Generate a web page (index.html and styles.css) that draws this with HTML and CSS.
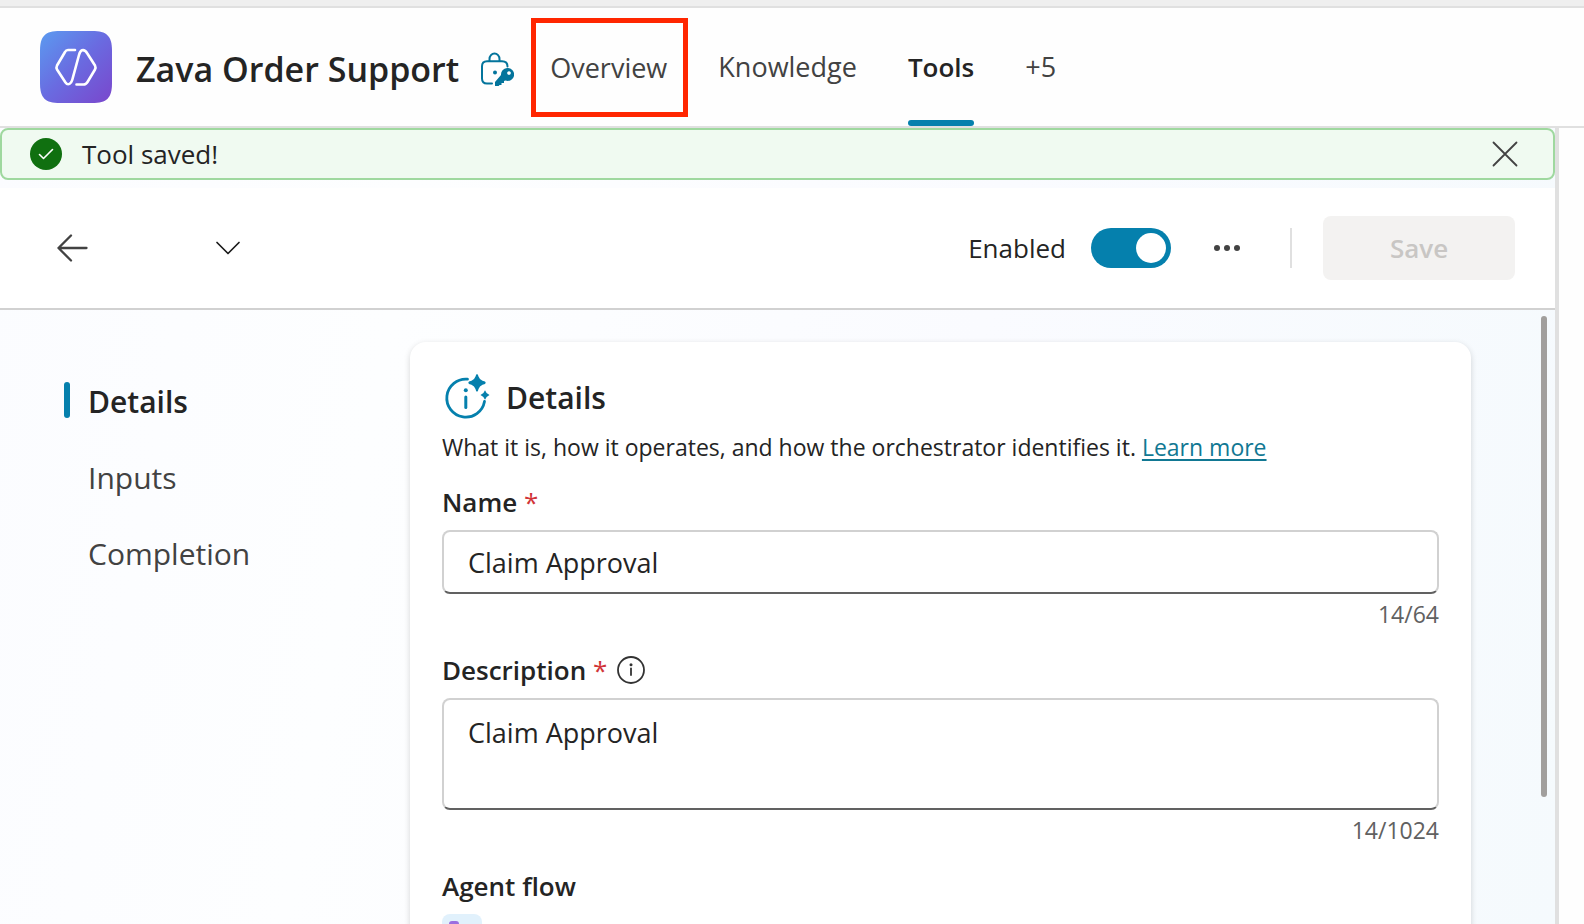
FILE: index.html
```html
<!DOCTYPE html>
<html lang="en">
<head>
<meta charset="utf-8">
<title>Zava Order Support</title>
<link rel="stylesheet" href="styles.css">
</head>
<body>
<header class="header">
  <svg class="logo" viewBox="0 0 72 72" aria-hidden="true">
    <defs>
      <linearGradient id="logo-fill" x1="0" y1="0" x2="1" y2="1">
        <stop offset="0" stop-color="#5b9bf0"/>
        <stop offset=".5" stop-color="#6a6ae0"/>
        <stop offset="1" stop-color="#7a46cc"/>
      </linearGradient>
    </defs>
    <path fill="url(#logo-fill)" d="M0 20C0 5 5 0 20 0H52C67 0 72 5 72 20V52C72 67 67 72 52 72H20C5 72 0 67 0 52Z"/>
    <path fill="none" stroke="#fff" stroke-width="2.600" stroke-linecap="round" stroke-linejoin="round" d="M35 19H28Q26 19 25 21L17 34.500Q16 36.500 17 38.500L25.500 51.500Q28 55 31 51.500Q32 50 32.500 48L39 24Q40 20 42 19.200Q45 18.500 47 22L55 34.500Q56 36.500 55 38.500L47.500 51Q46 53.500 43.500 53.500H36.500"/>
  </svg>
  <h1 class="title">Zava Order Support</h1>
  <svg class="lock" viewBox="0 0 34 36" aria-hidden="true">
    <g fill="none" stroke="#03749c" stroke-width="2" stroke-linecap="round">
      <path d="M9.500 9V7A5 5.500 0 0 1 19.500 7V9"/>
      <path d="M27.500 14.500C27.500 11 25.500 9.200 22 9.200H7Q2 9.200 2 14.200V26.500Q2 31.500 7 31.500H12"/>
    </g>
    <circle cx="15" cy="20.500" r="2" fill="#03749c"/>
    <path fill="#03749c" fill-rule="evenodd" d="M27 16a6.500 6.500 0 1 1-1.500 12.600L24 29v2h-2.500v2h-2l-.8 1H15v-4l6-7A6.500 6.500 0 0 1 27 16Zm2 3.200a1.800 1.800 0 1 0 .01 0Z"/>
  </svg>
  <nav class="tabs">
    <a class="tab tab-marked" href="#">Overview</a>
    <a class="tab" href="#">Knowledge</a>
    <a class="tab tab-current" href="#" aria-current="page">Tools</a>
    <button class="tab tab-more" type="button">+5</button>
  </nav>
</header>
<div class="body">
  <main class="main">
    <div class="banner" role="status">
      <svg class="check" viewBox="0 0 32 32" aria-hidden="true"><circle cx="16" cy="16" r="16" fill="#107010"/><path d="M9.500 16.500l4 4 9-9" fill="none" stroke="#fff" stroke-width="1.600" stroke-linecap="round" stroke-linejoin="round"/></svg>
      <span class="banner-text">Tool saved!</span>
      <button class="icon-button" type="button" aria-label="Dismiss"><svg width="26" height="26" viewBox="0 0 26 26"><path d="M1.500 1.500l23 23M24.500 1.500l-23 23" stroke="#424242" stroke-width="1.800" stroke-linecap="round"/></svg></button>
    </div>
    <div class="toolbar">
      <button class="icon-button back" type="button" aria-label="Back"><svg width="32" height="30" viewBox="0 0 32 30"><path d="M15 2.500L2.500 15 15 27.500M2.500 15h28" fill="none" stroke="#424242" stroke-width="2.300" stroke-linecap="round" stroke-linejoin="round"/></svg></button>
      <button class="icon-button" type="button" aria-label="Switch tool"><svg width="26" height="16" viewBox="0 0 26 16"><path d="M2 2.500l11 11 11-11" fill="none" stroke="#1b1b1b" stroke-width="1.700" stroke-linecap="round" stroke-linejoin="round"/></svg></button>
      <label class="enabled" for="enabled">Enabled</label>
      <input class="switch" id="enabled" type="checkbox" role="switch" checked>
      <button class="icon-button more" type="button" aria-label="More"><svg width="28" height="8" viewBox="0 0 28 8" fill="#424242"><circle cx="4" cy="4" r="3"/><circle cx="14" cy="4" r="3"/><circle cx="24" cy="4" r="3"/></svg></button>
      <span class="divider"></span>
      <button class="save" type="button" disabled>Save</button>
    </div>
    <div class="content">
      <nav class="sections">
        <a class="section section-current" href="#">Details</a>
        <a class="section" href="#">Inputs</a>
        <a class="section" href="#">Completion</a>
      </nav>
      <section class="card">
        <div class="card-head">
          <svg class="card-icon" viewBox="0 0 48 46" aria-hidden="true">
            <path d="M25.500 5.200A19 19 0 1 0 42.500 27.500" fill="none" stroke="#0580ad" stroke-width="2.800" stroke-linecap="round"/>
            <path d="M23.800 23v10.500" stroke="#0580ad" stroke-width="3" stroke-linecap="round"/>
            <circle cx="23.800" cy="16.200" r="2" fill="#0580ad"/>
            <path fill="#0580ad" d="M35 0Q36 0 36.500 2.500Q37.500 5.500 40.500 6.700L43 7.600Q44.500 8.800 43 10L40.500 10.800Q37.500 12 36.500 15Q36 17.800 35 17.800Q34 17.800 33.500 15Q32.500 12 29.500 10.800L27 10Q25.500 8.800 27 7.600L29.500 6.700Q32.500 5.500 33.500 2.500Q34 0 35 0Z"/>
            <path fill="#0580ad" d="M43 16.200Q44 19.500 47.500 21Q44 22.500 43 25.800Q42 22.500 38.500 21Q42 19.500 43 16.200Z"/>
          </svg>
          <h2 class="card-title">Details</h2>
        </div>
        <p class="summary">What it is, how it operates, and how the orchestrator identifies it. <a class="link" href="#">Learn more</a></p>
        <div class="field">
          <label class="label" for="name">Name <span class="required">*</span></label>
          <input class="control" id="name" type="text" value="Claim Approval">
          <span class="counter">14/64</span>
        </div>
        <div class="field">
          <div class="label-row">
            <label class="label" for="description">Description <span class="required">*</span></label>
            <button class="icon-button" type="button" aria-label="About the description"><svg width="28" height="28" viewBox="0 0 28 28"><circle cx="14" cy="14" r="13" fill="none" stroke="#333" stroke-width="1.800"/><path d="M14 12.500v6.500" stroke="#333" stroke-width="1.800" stroke-linecap="round"/><circle cx="14" cy="8.800" r="1.500" fill="#333"/></svg></button>
          </div>
          <textarea class="control control-tall" id="description">Claim Approval</textarea>
          <span class="counter">14/1024</span>
        </div>
        <div class="field">
          <h3 class="label">Agent flow</h3>
          <svg class="flow-icon" viewBox="0 0 40 40" aria-hidden="true"><rect width="40" height="40" rx="8" fill="#e1f1fc"/><rect x="7" y="7" width="10" height="10" rx="3" fill="#9a6fe0"/><path d="M12 17v11h14" fill="none" stroke="#9a6fe0" stroke-width="2"/><rect x="23" y="23" width="10" height="10" rx="3" fill="#9a6fe0"/></svg>
        </div>
      </section>
      <span class="scrollbar"></span>
    </div>
  </main>
  <aside class="side"></aside>
</div>
</body>
</html>
```
FILE: styles.css
```css
* { box-sizing: border-box; }

body {
  margin: 0;
  height: 100vh;
  overflow: hidden;
  display: flex;
  flex-direction: column;
  border-top: 6px solid #efefef;
  background: #fefefe;
  color: #242424;
  font-family: "Open Sans", "Noto Sans", sans-serif;
  font-size: 26px;
  line-height: 40px;
}

h1, h2, h3, p { margin: 0; }
a { color: inherit; text-decoration: none; }
button, input, textarea { font: inherit; color: inherit; }
svg { display: block; flex: none; }

.icon-button {
  display: flex;
  padding: 0;
  border: 0;
  background: none;
}

.header {
  flex: none;
  display: flex;
  align-items: center;
  height: 122px;
  padding-left: 40px;
  border-top: 2px solid #e0e0e0;
  border-bottom: 2px solid #e0e0e0;
}
.logo { width: 72px; height: 72px; }
.title {
  margin-left: 24px;
  padding-top: 4px;
  font-size: 34px;
  font-weight: 600;
  line-height: 48px;
  white-space: nowrap;
}
.lock { width: 34px; height: 36px; margin: 6px 0 0 21px; }
.tabs {
  align-self: stretch;
  display: flex;
  align-items: stretch;
  gap: 51px;
  margin-left: 17px;
  color: #424242;
  font-size: 27px;
}
.tab {
  display: flex;
  align-items: center;
  padding: 0;
  border: 0;
  background: none;
}
.tab-marked {
  margin: 10px -21px 9px 0;
  padding: 0 16px 0 14px;
  border: 5px solid #ff2600;
}
.tab-current {
  position: relative;
  color: #242424;
  font-size: 26px;
  font-weight: 600;
}
.tab-current::after {
  content: "";
  position: absolute;
  right: 0;
  bottom: 0;
  left: 0;
  height: 6px;
  border-radius: 3px;
  background: #0580ad;
}
.tab-more { font-weight: 500; }

.body { flex: 1; min-height: 0; display: flex; }
.main {
  flex: 1;
  min-width: 0;
  display: flex;
  flex-direction: column;
  background: linear-gradient(100deg, #fbfcff, #fdfeff 25%, #fafbff 60%, #f5fafd);
}
.side { width: 29px; border-left: 4px solid #e0e0e0; }

.banner {
  flex: none;
  display: flex;
  align-items: center;
  height: 52px;
  padding: 0 35px 0 28px;
  border: 2px solid #9fd89f;
  border-radius: 8px;
  background: #f0faf1;
}
.check { width: 32px; height: 32px; }
.banner-text { flex: 1; margin-left: 20px; }

.toolbar {
  flex: none;
  display: flex;
  align-items: center;
  height: 122px;
  margin-top: 8px;
  padding: 0 40px 0 56px;
  border-bottom: 2px solid #d1d1d1;
  background: #fff;
}
.back { margin-right: 127px; }
.enabled { margin-left: auto; }
.switch {
  appearance: none;
  display: flex;
  justify-content: flex-end;
  width: 80px;
  height: 40px;
  margin: 0 0 0 25px;
  padding: 5px;
  border-radius: 20px;
  background: #0580ad;
}
.switch::before {
  content: "";
  width: 30px;
  height: 30px;
  border-radius: 50%;
  background: #fff;
}
.switch:not(:checked) { justify-content: flex-start; background: #8a8a8a; }
.more { margin-left: 42px; }
.divider { width: 2px; height: 40px; margin: 0 31px 0 49px; background: #e0e0e0; }
.save {
  width: 192px;
  height: 64px;
  padding: 0;
  border: 0;
  border-radius: 8px;
  background: #f3f2f1;
  color: #c8c6c4;
  font-weight: 600;
}

.content {
  flex: 1;
  min-height: 0;
  display: flex;
  align-items: flex-start;
  padding-top: 6px;
  padding-right: 8px;
  overflow: hidden;
}
.sections {
  flex: none;
  display: flex;
  flex-direction: column;
  gap: 36px;
  width: 346px;
  margin: 66px 0 0 64px;
  color: #424242;
  font-size: 30px;
  line-height: 40px;
}
.section { padding-left: 24px; }
.section-current {
  display: flex;
  padding-left: 0;
  color: #242424;
  font-weight: 600;
}
.section-current::before {
  content: "";
  width: 6px;
  height: 36px;
  margin-right: 18px;
  border-radius: 3px;
  background: #0580ad;
}

.card {
  flex: 1;
  min-width: 0;
  min-height: 620px;
  margin-top: 26px;
  padding: 32px;
  border-radius: 16px;
  background: #fff;
  box-shadow: 0 2px 6px rgba(0, 0, 0, .16);
}
.card-head { display: flex; align-items: center; height: 46px; }
.card-icon { width: 48px; height: 46px; }
.card-title { margin-left: 16px; padding-top: 2px; font-size: 30px; font-weight: 600; }
.summary { margin-top: 11px; font-size: 23px; line-height: 32px; }
.link {
  color: #117893;
  text-decoration: underline;
  text-decoration-thickness: 2px;
  text-underline-offset: 3px;
}

.field { display: flex; flex-direction: column; margin-top: 19px; }
.label-row { display: flex; align-items: center; gap: 10px; }
.label { font-size: 26px; font-weight: 600; line-height: 40px; }
.required { color: #d13438; font-weight: 400; }
.control {
  width: 100%;
  height: 64px;
  margin-top: 8px;
  padding: 0 24px;
  border: 2px solid #d1d1d1;
  border-bottom-color: #616161;
  border-radius: 8px;
  background: #fff;
  outline: 0;
  font-size: 27px;
}
.control-tall { height: 112px; padding-top: 13px; resize: none; }
.counter {
  margin-top: 4px;
  color: #616161;
  font-size: 23px;
  line-height: 33px;
  text-align: right;
}
.flow-icon { width: 40px; height: 40px; margin-top: 8px; }

.scrollbar {
  width: 6px;
  height: 481px;
  margin-left: 70px;
  border-radius: 3px;
  background: #a19f9d;
}
```
